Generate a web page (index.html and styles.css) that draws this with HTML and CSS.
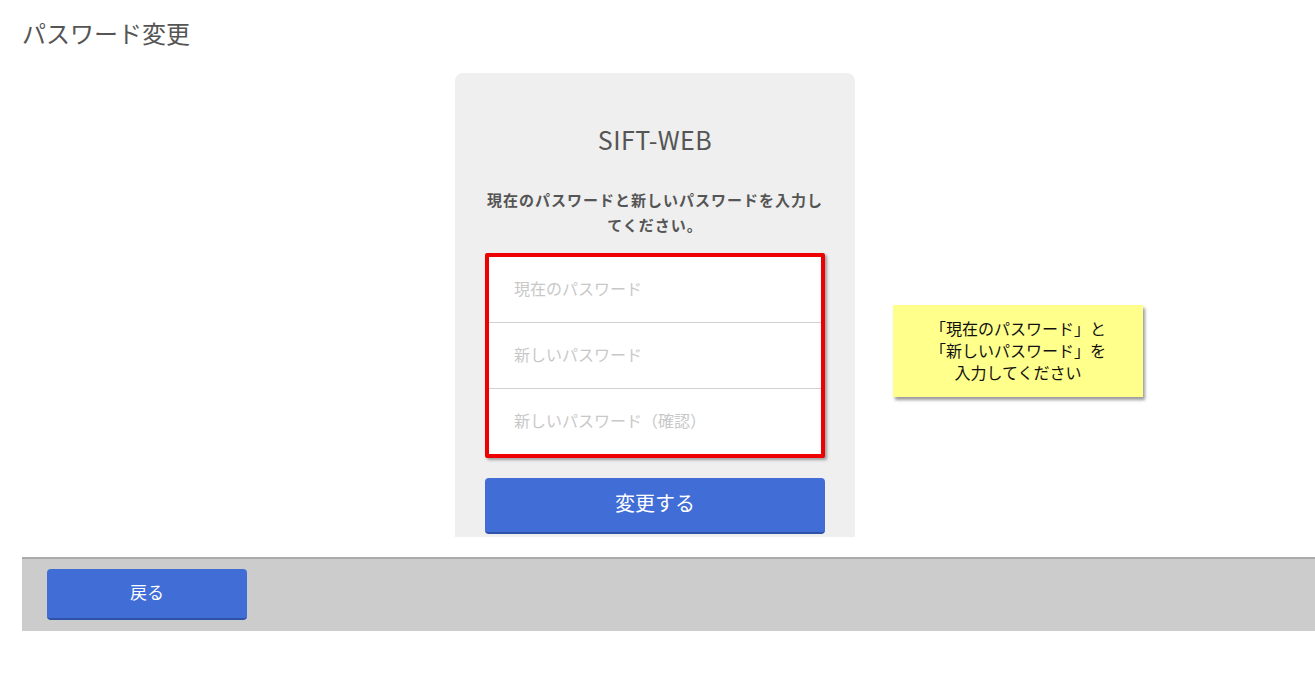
FILE: index.html
```html
<!DOCTYPE html>
<html lang="ja">
<head>
    <meta charset="UTF-8">
    <meta name="viewport" content="width=device-width, initial-scale=1.0">
    <title>パスワード変更</title>
    <link rel="stylesheet" href="styles.css">
</head>
<body>
    <h1 class="page-title">パスワード変更</h1>

    <div class="main">
        <div class="card">
            <div class="brand">SIFT-WEB</div>
            <p class="lead">現在のパスワードと新しいパスワードを入力してください。</p>

            <!-- Password inputs -->
            <div class="fields">
                <input type="password" class="field" placeholder="現在のパスワード">
                <input type="password" class="field" placeholder="新しいパスワード">
                <input type="password" class="field" placeholder="新しいパスワード（確認）">
            </div>

            <button class="btn btn-submit">変更する</button>
        </div>

        <!-- Annotation note -->
        <div class="note">「現在のパスワード」と<br>「新しいパスワード」を<br>入力してください</div>
    </div>

    <div class="footer">
        <button class="btn btn-back">戻る</button>
    </div>
</body>
</html>
```

FILE: styles.css
```css
/* General reset */
body {
    margin: 0;
    padding: 0;
    font-family: "Noto Sans CJK JP", "Noto Sans", sans-serif;
    color: #555;
    background-color: #fff;
}

/* Page title */
.page-title {
    margin: 0;
    padding: 17px 22px 0;
    font-size: 24px;
    font-weight: normal;
    line-height: 32px;
    color: #555;
}

/* Main area */
.main {
    position: relative;
    display: flex;
    justify-content: center;
    margin-top: 24px;
    padding-right: 5px;
}

.card {
    width: 340px;
    padding: 50px 30px 3px;
    background-color: #efefef;
    border-radius: 8px 8px 0 0;
}

.brand {
    text-align: center;
    font-size: 25px;
    line-height: 32px;
    letter-spacing: 0.5px;
    color: #555;
}

.lead {
    margin: 32px 0 16px;
    text-align: center;
    font-size: 15px;
    font-weight: bold;
    line-height: 25px;
    letter-spacing: 1px;
    color: #555;
}

/* Inputs box */
.fields {
    display: flex;
    flex-direction: column;
    border: 4px solid #ee0000;
    border-radius: 2px;
    background-color: #fff;
    box-shadow: 2px 2px 3px rgba(0, 0, 0, 0.35);
}

.field {
    height: 65px;
    padding: 0 25px 3px;
    border: none;
    font-family: inherit;
    font-size: 16px;
    color: #333;
    background-color: #fff;
    outline: none;
    box-sizing: border-box;
}

.field + .field {
    border-top: 1px solid #d0d0d0;
    height: 66px;
}

.field::placeholder {
    color: #c8c8c8;
}

/* Buttons */
.btn {
    background-color: #416dd6;
    border: none;
    border-bottom: 2px solid #2d52a8;
    border-radius: 4px;
    color: #fff;
    font-family: inherit;
    cursor: pointer;
}

.btn-submit {
    width: 100%;
    height: 56px;
    margin-top: 20px;
    padding-bottom: 6px;
    font-size: 20px;
}

.btn-back {
    width: 200px;
    height: 51px;
    padding-bottom: 5px;
    font-size: 17px;
}

/* Sticky note */
.note {
    position: absolute;
    left: 893px;
    top: 232px;
    width: 250px;
    padding: 12px 0 14px;
    box-sizing: border-box;
    background-color: #ffff8c;
    box-shadow: 2px 3px 3px rgba(0, 0, 0, 0.4);
    text-align: center;
    font-size: 16px;
    line-height: 22px;
    color: #111;
}

/* Footer bar */
.footer {
    margin: 20px 0 0 22px;
    padding: 10px 25px 11px;
    background-color: #cccccc;
    border-top: 2px solid #aaaaaa;
}
```
